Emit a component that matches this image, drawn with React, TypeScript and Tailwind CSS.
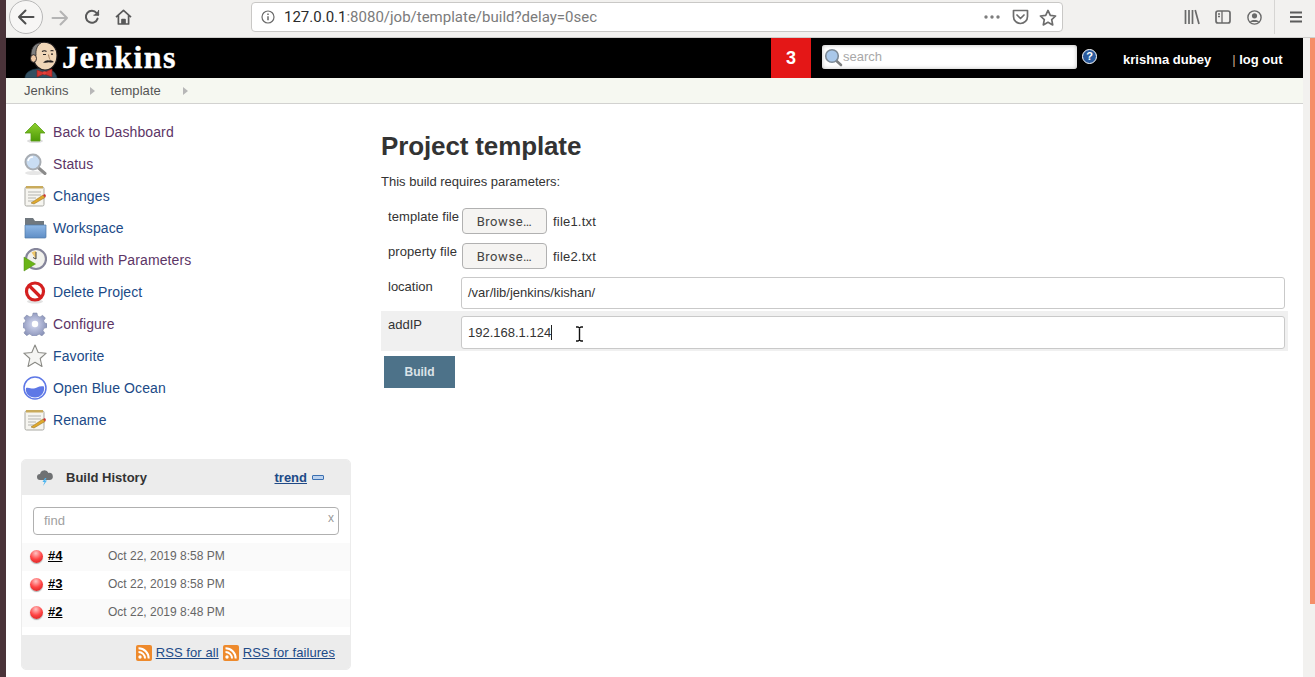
import React from "react"

const SANS = "font-['Liberation_Sans',Arial,sans-serif]"

const Back = () => (
  <div className="flex h-[34px] w-[34px] items-center justify-center rounded-full border border-[#b8b8b8] bg-[#f7f6f5]">
    <svg width="18" height="18" viewBox="0 0 18 18" fill="none" stroke="#4f4f4f" strokeWidth="2" strokeLinecap="round" strokeLinejoin="round">
      <path d="M16.5 9H2M8.5 2.5 2 9l6.5 6.5" />
    </svg>
  </div>
)

const Forward = () => (
  <svg width="18" height="18" viewBox="0 0 18 18" fill="none" stroke="#b4b4b4" strokeWidth="2" strokeLinecap="round" strokeLinejoin="round">
    <path d="M1.5 9H16M9.5 2.5 16 9l-6.5 6.5" />
  </svg>
)

const Reload = () => (
  <svg width="16" height="16" viewBox="0 0 16 16" fill="none" stroke="#595959" strokeWidth="2" strokeLinecap="round" strokeLinejoin="round">
    <path d="M13.6 9.6A6 6 0 1 1 12.6 4l1.600 1.600" />
    <path d="M14.600 1.400v4.800H9.800" fill="#595959" strokeWidth="1" />
  </svg>
)

const HomeIcon = () => (
  <svg width="17" height="16" viewBox="0 0 17 16" fill="none" stroke="#595959" strokeWidth="1.7" strokeLinejoin="round">
    <path d="M1 8.200 8.500 1.400 16 8.200M3.400 6.600V15h10.200V6.600" />
    <path d="M7 15v-4.500h3V15" fill="#595959" />
  </svg>
)

const ChromeBar = () => (
  <div className="flex h-[38px] shrink-0 items-start border-b border-[#cfcecc] bg-[#f2f1ef]">
    <div className="ml-[3px] flex h-[37px] w-[242px] items-start">
      <Back />
      <div className="ml-[8px] mt-[9px]"><Forward /></div>
      <div className="ml-[15px] mt-[9px]"><Reload /></div>
      <div className="ml-[15px] mt-[9px]"><HomeIcon /></div>
    </div>
    <div className="mt-[2px] flex h-[30px] w-[812px] items-center rounded-[4px] border border-[#c9c8c6] bg-white pl-[9px] pr-[5px]">
      <svg width="14" height="14" viewBox="0 0 14 14" fill="none" stroke="#6a6a6a" strokeWidth="1.2">
        <circle cx="7" cy="7" r="6" />
        <path d="M7 6.200v4M7 3.600v1.400" strokeWidth="1.5" />
      </svg>
      <span className="ml-[9px] font-['Roboto',sans-serif] text-[15px] text-[#2b2b2b]">
        127.0.0.1<span className="text-[#7b7b7b]">:8080/job/template/build?delay=0sec</span>
      </span>
      <div className="ml-auto flex items-center gap-[5px]">
        <svg width="16" height="4" viewBox="0 0 16 4" fill="#7d7d7d">
          <circle cx="2" cy="2" r="1.700" />
          <circle cx="8" cy="2" r="1.700" />
          <circle cx="14" cy="2" r="1.700" />
        </svg>
        <svg className="ml-[7px]" width="17" height="16" viewBox="0 0 17 16" fill="none" stroke="#6d6d6d" strokeWidth="1.7" strokeLinecap="round" strokeLinejoin="round">
          <path d="M1.500 1.500h14v6a7 7 0 0 1-14 0z" />
          <path d="m5 6 3.500 3.500L12 6" />
        </svg>
        <svg className="ml-[5px]" width="18" height="17" viewBox="0 0 18 17" fill="none" stroke="#6d6d6d" strokeWidth="1.7" strokeLinejoin="round">
          <path d="m9 1.400 2.300 4.900 5.300.7-3.900 3.600 1 5.300L9 13.300l-4.700 2.600 1-5.300L1.400 7l5.300-.7z" />
        </svg>
      </div>
    </div>
    <div className="ml-[121px] flex h-[34px] items-center">
      <svg width="16" height="16" viewBox="0 0 16 16" fill="none" stroke="#6a6a6a" strokeWidth="1.7">
        <path d="M1.500 1v14M5 1v14M8.500 1v14M11.200 1l3.800 14" />
      </svg>
      <svg className="ml-[15px]" width="16" height="14" viewBox="0 0 16 14" fill="none" stroke="#6a6a6a" strokeWidth="1.7">
        <rect x="1" y="1" width="14" height="12" rx="2" />
        <path d="M7 1v12M3 4h2M3 6.500h2" strokeWidth="1.3" />
      </svg>
      <svg className="ml-[16px]" width="15" height="15" viewBox="0 0 15 15" fill="none" stroke="#6a6a6a" strokeWidth="1.4">
        <circle cx="7.500" cy="7.500" r="6.600" />
        <circle cx="7.500" cy="5.800" r="2.600" fill="#6a6a6a" stroke="none" />
        <path d="M3 12c.8-2.600 8.200-2.600 9 0z" fill="#6a6a6a" stroke="none" />
      </svg>
      <div className="ml-[12px] h-[34px] w-px bg-[#d6d5d3]" />
      <svg className="ml-[15px]" width="12" height="12" viewBox="0 0 12 12" stroke="#5c5c5c" strokeWidth="1.8">
        <path d="M0 1.500h12M0 6h12M0 10.500h12" />
      </svg>
    </div>
  </div>
)

const ButlerLogo = () => (
  <svg width="36" height="37" viewBox="0 0 36 37">
    <path d="M1 37c0-4 3-7 8-8.500l9-1.500c7 0 14 3 15 10z" fill="#335061" stroke="#1d3442" strokeWidth=".6" />
    <path d="M8 16C7 7 12 1.200 20 1.200S33 7 33 14.500c0 8-5 14.500-12 14.500-6 0-10-5-11-9z" fill="#f0d6b7" stroke="#231f20" strokeWidth="1.100" />
    <path d="M9.500 22C4.500 14 7 2 17.500 1.500 13 4 11.500 9 12 14c-1 1-1 5-2.500 8z" fill="#7f7f7f" stroke="#231f20" strokeWidth=".8" />
    <ellipse cx="9.500" cy="17.500" rx="3" ry="3.800" fill="#efc9a6" stroke="#231f20" strokeWidth=".9" />
    <path d="M18 10.500q2.500-1.500 4.500 0M26.500 10q1.500-1 3 0" stroke="#231f20" fill="none" strokeWidth="1.100" />
    <path d="M19 13.500h3M27 13.200h2" stroke="#231f20" strokeWidth="1.200" />
    <path d="M24.500 13.500c.3 2.500 1 4 1.500 5" stroke="#a57f5e" fill="none" strokeWidth="1" />
    <path d="M19 21.500q3.500-2.800 6-2q3-.8 5 1.500-3 1-5 .3-3 .8-6 .2z" fill="#231f20" />
    <path d="M13 29l7 2.400 8-3.400v8l-8-3-7 3z" fill="#d33833" stroke="#8f1f1c" strokeWidth=".6" />
    <circle cx="20.500" cy="32" r="1.800" fill="#e8403a" />
  </svg>
)

const JenkinsBar = () => (
  <div className="flex h-[40px] shrink-0 items-stretch bg-black text-white">
    <div className="flex w-[765px] shrink-0">
      <div className="ml-[18px] mt-[3px]"><ButlerLogo /></div>
      <span className="ml-[2px] mt-[1px] font-['Liberation_Serif',serif] text-[32px] font-bold leading-[36px] tracking-[1.4px] [-webkit-text-stroke:0.4px_white]">Jenkins</span>
    </div>
    <div className={`${SANS} flex w-[40px] items-center justify-center bg-[#e41717] text-[18px] font-bold`}>3</div>
    <div className="ml-[11px] mt-[7px] flex h-[24px] w-[255px] items-center rounded-[3px] bg-white pl-[2px] shadow-[inset_0_0_4px_#bbb]">
      <svg width="19" height="19" viewBox="0 0 19 19">
        <path d="m11.500 12 5.500 5" stroke="#7d7f80" strokeWidth="2.600" strokeLinecap="round" />
        <circle cx="8" cy="8" r="6.300" fill="#a9c8ea" stroke="#7d8a96" strokeWidth="1.600" />
      </svg>
      <span className={`${SANS} text-[13px] text-[#a8a8a8]`}>search</span>
    </div>
    <div className="ml-[5px] mt-[11px] flex h-[15px] w-[15px] items-center justify-center rounded-full border border-white bg-[#2a5a9c] font-['Liberation_Sans',sans-serif] text-[11px] font-bold leading-none">?</div>
    <div className={`${SANS} ml-[26px] mt-[14px] text-[13px] font-bold leading-[15px]`}>krishna dubey</div>
    <div className={`${SANS} ml-[21px] mt-[14px] text-[13px] font-bold leading-[15px]`}>
      <span className="font-normal text-[#c8a78a]">|</span> log out
    </div>
  </div>
)

const Crumb = () => <span className="mt-px block h-0 w-0 border-y-[4px] border-l-[5px] border-y-transparent border-l-[#b7b7b7]" />

const Breadcrumb = () => (
  <div className={`${SANS} flex h-[26px] shrink-0 items-center border-b border-[#d2d2d0] bg-[#f6f8f1] pl-[18px] text-[13px] tracking-[0.06px] text-[#555]`}>
    <span>Jenkins</span>
    <span className="ml-[21px]"><Crumb /></span>
    <span className="ml-[16px]">template</span>
    <span className="ml-[22px]"><Crumb /></span>
  </div>
)

const UpIcon = () => (
  <svg width="24" height="24" viewBox="0 0 24 24">
    <defs>
      <linearGradient id="up" x1="0" x2="0" y1="0" y2="1">
        <stop offset="0" stopColor="#8fd12e" />
        <stop offset="1" stopColor="#4d9a06" />
      </linearGradient>
    </defs>
    <ellipse cx="12" cy="21" rx="8" ry="2" fill="#ddd" />
    <path d="M12 3 22 13h-5v8H8v-8H2z" fill="url(#up)" stroke="#5a9e16" strokeWidth=".8" />
  </svg>
)

const LensIcon = () => (
  <svg width="24" height="24" viewBox="0 0 24 24">
    <ellipse cx="11" cy="21" rx="9" ry="2" fill="#e6e6e6" />
    <path d="m15 15.500 7 6" stroke="#8b8b8b" strokeWidth="3" strokeLinecap="round" />
    <circle cx="10" cy="10" r="7.500" fill="#c9ddf3" stroke="#a8adb3" strokeWidth="2" />
    <path d="M5 9a5 5 0 0 1 5-4" stroke="#fff" strokeWidth="1.500" fill="none" />
  </svg>
)

const NotepadIcon = () => (
  <svg width="24" height="24" viewBox="0 0 24 24">
    <rect x="2" y="3" width="19" height="19" rx="1.500" fill="#f6f5f0" stroke="#a9a9a3" />
    <rect x="3" y="2" width="17" height="2.500" fill="#c9ab5c" />
    <path d="M5 8h13M5 11h13M5 14h8M5 17h6" stroke="#b5b5b0" />
    <path d="m8 19 12-8 2 2.500-11 6.500z" fill="#e0a92d" stroke="#8a6a20" strokeWidth=".5" />
    <path d="m20 11 2-1 1 2-1 1.500z" fill="#c33" />
  </svg>
)

const FolderIcon = () => (
  <svg width="24" height="24" viewBox="0 0 24 24">
    <defs>
      <linearGradient id="fold" x1="0" x2="0" y1="0" y2="1">
        <stop offset="0" stopColor="#8fb8e6" />
        <stop offset="1" stopColor="#5f8ec6" />
      </linearGradient>
    </defs>
    <path d="M2 2h8l2 3h9v15H2z" fill="#70787f" />
    <path d="M2 9h21v12a1 1 0 0 1-1 1H2z" fill="url(#fold)" stroke="#4f78a8" strokeWidth=".7" />
  </svg>
)

const BuildIcon = () => (
  <svg width="24" height="24" viewBox="0 0 24 24">
    <circle cx="13" cy="11" r="10" fill="#f1f1ec" stroke="#85859a" strokeWidth="2.200" />
    <path d="M13 11 8.500 4.500A8 8 0 0 1 13 3z" fill="#eec76b" />
    <path d="M13 4v7l-3-1.500" stroke="#444" fill="none" />
    <path d="M1 9 12.500 16 1 23z" fill="#6ab417" stroke="#4f8c10" strokeWidth=".5" />
  </svg>
)

const DeleteIcon = () => (
  <svg width="24" height="24" viewBox="0 0 24 24">
    <ellipse cx="12" cy="21.500" rx="8" ry="2" fill="#e2e2e2" />
    <circle cx="12" cy="11.500" r="8.500" fill="#fff" stroke="#d42020" strokeWidth="3.200" />
    <path d="m6 5.500 12 12" stroke="#d42020" strokeWidth="3.200" />
  </svg>
)

const GearIcon = () => (
  <svg width="24" height="24" viewBox="0 0 24 24">
    <defs>
      <radialGradient id="gear" cx="0.5" cy="0.45" r="0.6">
        <stop offset="0.2" stopColor="#c5cbe6" />
        <stop offset="1" stopColor="#7f88b0" />
      </radialGradient>
    </defs>
    <path
      d="M10 1h4l.6 3 2.400 1 2.600-1.700 2.800 2.800L20.700 8.700l1 2.300 2.300.6v4l-3 .6-1 2.300 1.700 2.600-2.800 2.800-2.600-1.700-2.400 1-.6 2.800h-4l-.6-3-2.400-1-2.600 1.700-2.800-2.800 1.700-2.600-1-2.300-3-.6v-4l3-.6 1-2.300-1.700-2.600 2.800-2.800L7 5l2.400-1z"
      fill="url(#gear)"
      stroke="#7f88a6"
      strokeWidth=".5"
    />
    <circle cx="12" cy="12" r="3.200" fill="#fff" />
  </svg>
)

const StarIcon = () => (
  <svg width="24" height="24" viewBox="0 0 24 24">
    <path d="m12 1 3.200 7.500 8 .7-6 5.300 1.800 8L12 18.300 5 22.500l1.800-8-6-5.300 8-.7z" fill="#f5f5f3" stroke="#8a8a85" strokeWidth="1.100" strokeLinejoin="round" />
  </svg>
)

const OceanIcon = () => (
  <svg width="24" height="24" viewBox="0 0 24 24">
    <circle cx="12" cy="12" r="11" fill="#fff" stroke="#5e78e6" strokeWidth="1.500" />
    <path d="M3 12c3-1 5 1 8 .5s5-3 10-2c1 6-3 11-9 11S2 17 3 12z" fill="#5e78e6" />
  </svg>
)

const sideItems = [
  { label: "Back to Dashboard", icon: <UpIcon />, visited: true },
  { label: "Status", icon: <LensIcon />, visited: true },
  { label: "Changes", icon: <NotepadIcon />, visited: false },
  { label: "Workspace", icon: <FolderIcon />, visited: false },
  { label: "Build with Parameters", icon: <BuildIcon />, visited: true },
  { label: "Delete Project", icon: <DeleteIcon />, visited: false },
  { label: "Configure", icon: <GearIcon />, visited: true },
  { label: "Favorite", icon: <StarIcon />, visited: false },
  { label: "Open Blue Ocean", icon: <OceanIcon />, visited: false },
  { label: "Rename", icon: <NotepadIcon />, visited: false },
]

const RedBall = () => (
  <span className="block h-[13px] w-[13px] rounded-full bg-[radial-gradient(circle_at_45%_25%,#ffc4c4,#f44_50%,#c81818)] shadow-[0_1px_1px_#aaa]" />
)

const Rss = () => (
  <svg width="16" height="16" viewBox="0 0 16 16">
    <rect width="16" height="16" rx="2" fill="#ee8a2c" />
    <circle cx="4" cy="12" r="1.700" fill="#fff" />
    <path d="M2.500 7a6.500 6.500 0 0 1 6.500 6.500M2.500 3.300a10.200 10.200 0 0 1 10.200 10.200" stroke="#fff" strokeWidth="2" fill="none" />
  </svg>
)

const builds = [
  { id: "#4", date: "Oct 22, 2019 8:58 PM", tint: true },
  { id: "#3", date: "Oct 22, 2019 8:58 PM", tint: false },
  { id: "#2", date: "Oct 22, 2019 8:48 PM", tint: true },
]

const BuildHistory = () => (
  <div className="ml-[15px] mt-[23px] w-[330px] overflow-hidden rounded-[5px] border border-[#ececec] bg-white">
    <div className="flex h-[35px] items-center bg-[#ececec] pl-[14px] pr-[26px] text-[13px]">
      <svg width="18" height="18" viewBox="0 0 18 18">
        <path d="M4 11a3 3 0 0 1 0-6 4.500 4.500 0 0 1 8.500-1A3.500 3.500 0 0 1 14 11z" fill="#6f7173" />
        <path d="M9 9 6.500 13h2L7 17l4-5.500H9l1.500-2.500z" fill="#4fb6f0" />
      </svg>
      <span className="ml-[12px] font-bold text-[#333]">Build History</span>
      <span className="ml-auto font-bold text-[#204a87] underline">trend</span>
      <span className="ml-[5px] h-[5px] w-[12px] rounded-[1px] border border-[#3a6fb0] bg-[#bcd2ee]" />
    </div>
    <div className="px-[11px] pt-[12px]">
      <div className="relative flex h-[28px] items-center rounded-[4px] border border-[#b0b0b0] bg-white pl-[10px] text-[13px] text-[#a0a0a0]">
        find
        <span className="absolute right-[4px] top-[1px] text-[12px] text-[#999]">x</span>
      </div>
    </div>
    <div className="mt-[8px]">
      {builds.map((b) => (
        <div key={b.id} className={`flex h-[28px] items-center pb-[2px] pl-[8px] text-[12px] ${b.tint ? "bg-[#fafafa]" : "bg-white"}`}>
          <RedBall />
          <span className="ml-[5px] w-[60px] text-[13px] font-bold text-black underline">{b.id}</span>
          <span className="text-[#666]">{b.date}</span>
        </div>
      ))}
    </div>
    <div className="mt-[8px] flex h-[34px] items-center justify-end bg-[#ececec] pr-[15px] pt-px text-[13px] tracking-[0.08px] text-[#204a87]">
      <Rss />
      <span className="ml-[4px] underline">RSS for all</span>
      <span className="ml-[4px]"><Rss /></span>
      <span className="ml-[4px] underline">RSS for failures</span>
    </div>
  </div>
)

const Sidebar = () => (
  <div className="w-[375px] shrink-0">
    <div className="mt-[12px] flex flex-col pl-[17px]">
      {sideItems.map((item) => (
        <div key={item.label} className="flex h-[32px] items-center text-[14px] tracking-[0.1px]">
          <span className="flex w-[30px] shrink-0">{item.icon}</span>
          <span className={item.visited ? "text-[#5c3566]" : "text-[#204a87]"}>{item.label}</span>
        </div>
      ))}
    </div>
    <BuildHistory />
  </div>
)

const FileRow = ({ label, file }: { label: string; file: string }) => (
  <div className="flex h-[35px] items-start pl-[7px]">
    <span className="mt-[1px] w-[74px] shrink-0 leading-[15px] tracking-[0.08px]">{label}</span>
    <span className="flex h-[26px] w-[85px] items-center justify-center rounded-[4px] border border-[#b1b1b1] bg-[#f5f4f2] pt-px font-['Roboto',sans-serif] text-[13px] tracking-[0.55px] text-[#444]">
      Browse…
    </span>
    <span className="ml-[6px] mt-[6px] leading-[15px] tracking-[0.2px]">{file}</span>
  </div>
)

const Cursor = () => (
  <svg className="absolute left-[113px] top-[9px]" width="9" height="16" viewBox="0 0 9 16" fill="none">
    <path d="M1 1h2l1.500 1L6 1h2M4.500 2v12M1 15h2l1.500-1L6 15h2" stroke="#fff" strokeWidth="3" />
    <path d="M1 1h2l1.500 1L6 1h2M4.500 2v12M1 15h2l1.500-1L6 15h2" stroke="#111" strokeWidth="1.400" />
  </svg>
)

const BuildForm = () => (
  <div className="min-w-0 flex-1 pr-[15px] text-[13px] text-[#333]">
    <h1 className="mt-[26px] text-[26px] font-bold leading-[32px] tracking-[-0.13px] text-[#333]">Project template</h1>
    <p className="mt-[12px] leading-[15px]">This build requires parameters:</p>
    <div className="mt-[19px]">
      <FileRow label="template file" file="file1.txt" />
      <div className="-mb-px"><FileRow label="property file" file="file2.txt" /></div>
      <div className="flex h-[34px] items-start pl-[7px]">
        <span className="mt-[2px] w-[73px] shrink-0 leading-[15px]">location</span>
        <div className="flex h-[32px] w-[824px] items-center rounded-[3px] border border-[#c9c9c9] bg-white pl-[6px]">/var/lib/jenkins/kishan/</div>
      </div>
      <div className="flex h-[40px] items-start bg-[#f0f0f0] pl-[7px] pt-[5px]">
        <span className="mt-px w-[73px] shrink-0 leading-[15px]">addIP</span>
        <div className="relative flex h-[33px] w-[824px] items-center rounded-[3px] border border-[#c9c9c9] bg-white pl-[6px]">
          192.168.1.124<span className="h-[15px] w-px bg-[#222]" />
          <Cursor />
        </div>
      </div>
    </div>
    <div className="ml-[3px] mt-[5px] flex h-[32px] w-[71px] items-center justify-center bg-[#4d7289] text-[12px] font-bold text-[#dbe3e8]">Build</div>
  </div>
)

export default function App(): React.JSX.Element {
  return (
    <div className={`${SANS} flex h-[677px] w-[1315px] overflow-hidden bg-white`}>
      <div className="w-[6px] shrink-0 bg-[#4a3339]" />
      <div className="flex min-w-0 flex-1 flex-col">
        <ChromeBar />
        <div className="flex min-h-0 flex-1">
          <div className="flex min-w-0 flex-1 flex-col">
            <JenkinsBar />
            <Breadcrumb />
            <div className="flex min-h-0 flex-1">
              <Sidebar />
              <BuildForm />
            </div>
          </div>
          <div className="flex w-[12px] shrink-0 justify-end bg-[#f2f1ef]">
            <div className="h-[566px] w-[5px] bg-[#f58e68]" />
          </div>
        </div>
      </div>
    </div>
  )
}
